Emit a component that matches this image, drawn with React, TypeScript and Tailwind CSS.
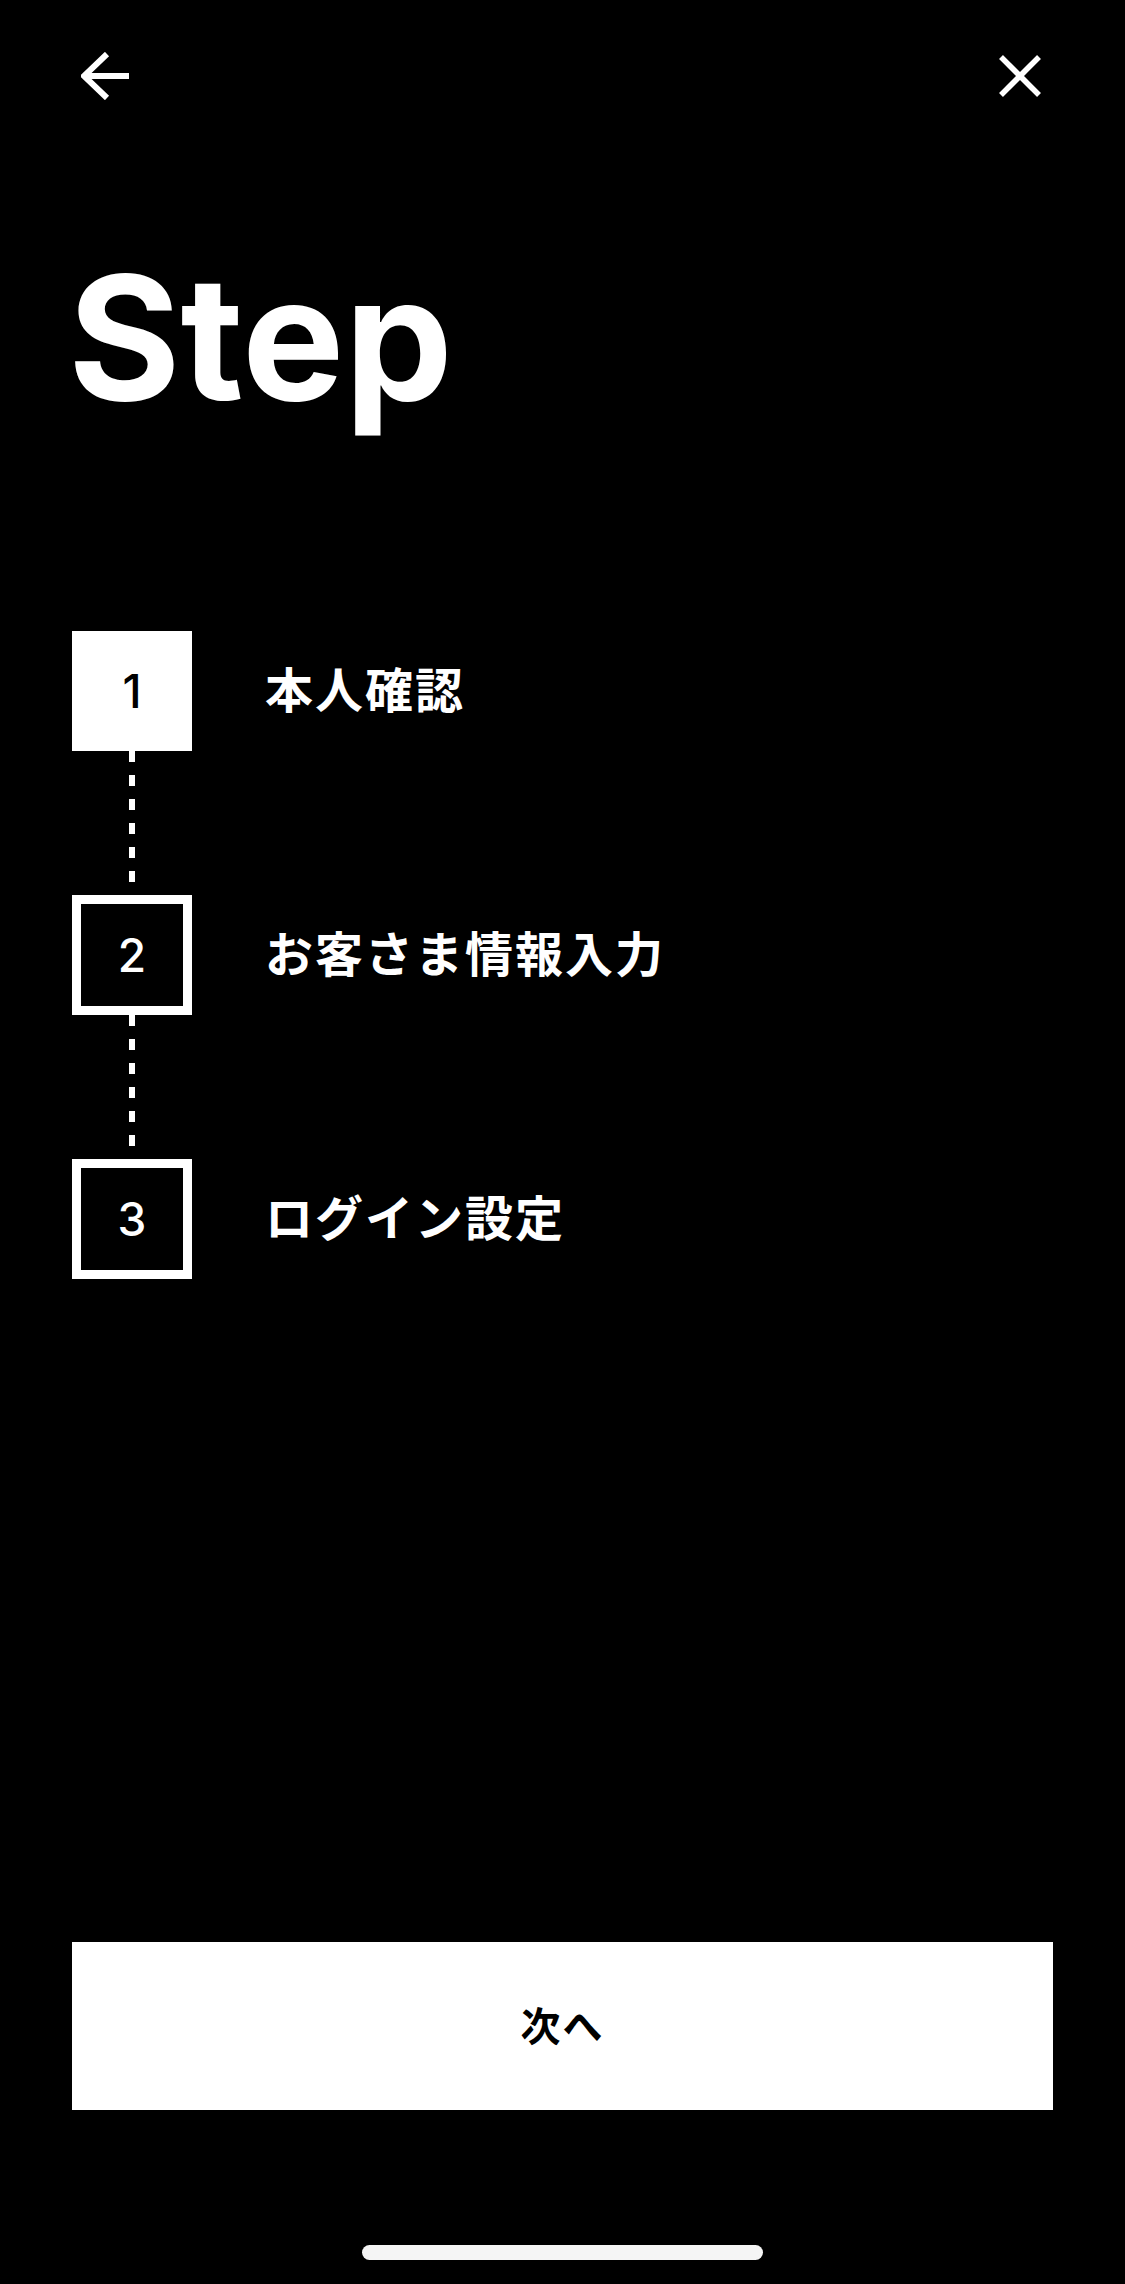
const steps = [
  { no: 1, label: '本人確認', active: true },
  { no: 2, label: 'お客さま情報入力', active: false },
  { no: 3, label: 'ログイン設定', active: false },
]

const BackIcon = () => (
  <svg width="48" height="48" viewBox="0 0 48 48" fill="none" stroke="white" strokeWidth="6">
    <path d="M4 24H48" />
    <path d="M26 2L3 24L26 46" strokeLinejoin="miter" />
  </svg>
)

const CloseIcon = () => (
  <svg width="44" height="44" viewBox="0 0 44 44" fill="none" stroke="white" strokeWidth="5.5">
    <path d="M3 3L41 41" />
    <path d="M41 3L3 41" />
  </svg>
)

function App() {
  return (
    <div className="flex h-[2284px] w-full flex-col bg-black font-['Noto_Sans_CJK_JP',sans-serif] text-white">
      <header className="flex h-[152px] items-center justify-between pl-[81px] pr-[83px]">
        <BackIcon />
        <CloseIcon />
      </header>

      <h1 className="ml-[68px] mt-[99px] font-['Inter',sans-serif] text-[172px] font-bold leading-none">
        Step
      </h1>

      <ol className="ml-[72px] mt-[208px] flex flex-col">
        {steps.map((step, i) => (
          <li key={step.no} className="flex flex-col">
            <div className="flex items-center">
              <div
                className={`flex h-[120px] w-[120px] items-center justify-center border-[9px] border-white font-['Inter',sans-serif] text-[46px] font-medium ${
                  step.active ? 'bg-white text-black' : 'bg-black text-white'
                }`}
              >
                {step.no}
              </div>
              <span className="ml-[73px] pb-[8px] text-[48px] font-bold leading-none tracking-[2px]">{step.label}</span>
            </div>
            {i < steps.length - 1 && (
              <div className="flex w-[120px] justify-center">
                <div className="h-[144px] w-[6px] bg-[repeating-linear-gradient(to_bottom,#ffffff_0_11px,transparent_11px_24px)]" />
              </div>
            )}
          </li>
        ))}
      </ol>

      <button
        type="button"
        className="mx-[72px] mt-auto flex h-[168px] items-center justify-center bg-white pb-[4px] text-[40px] font-bold tracking-[2px] text-black"
      >
        次へ
      </button>

      <div className="flex h-[174px] flex-col items-center">
        <div className="mt-[135px] h-[15px] w-[401px] rounded-full bg-[#f5f5f5]" />
      </div>
    </div>
  )
}

export default App
